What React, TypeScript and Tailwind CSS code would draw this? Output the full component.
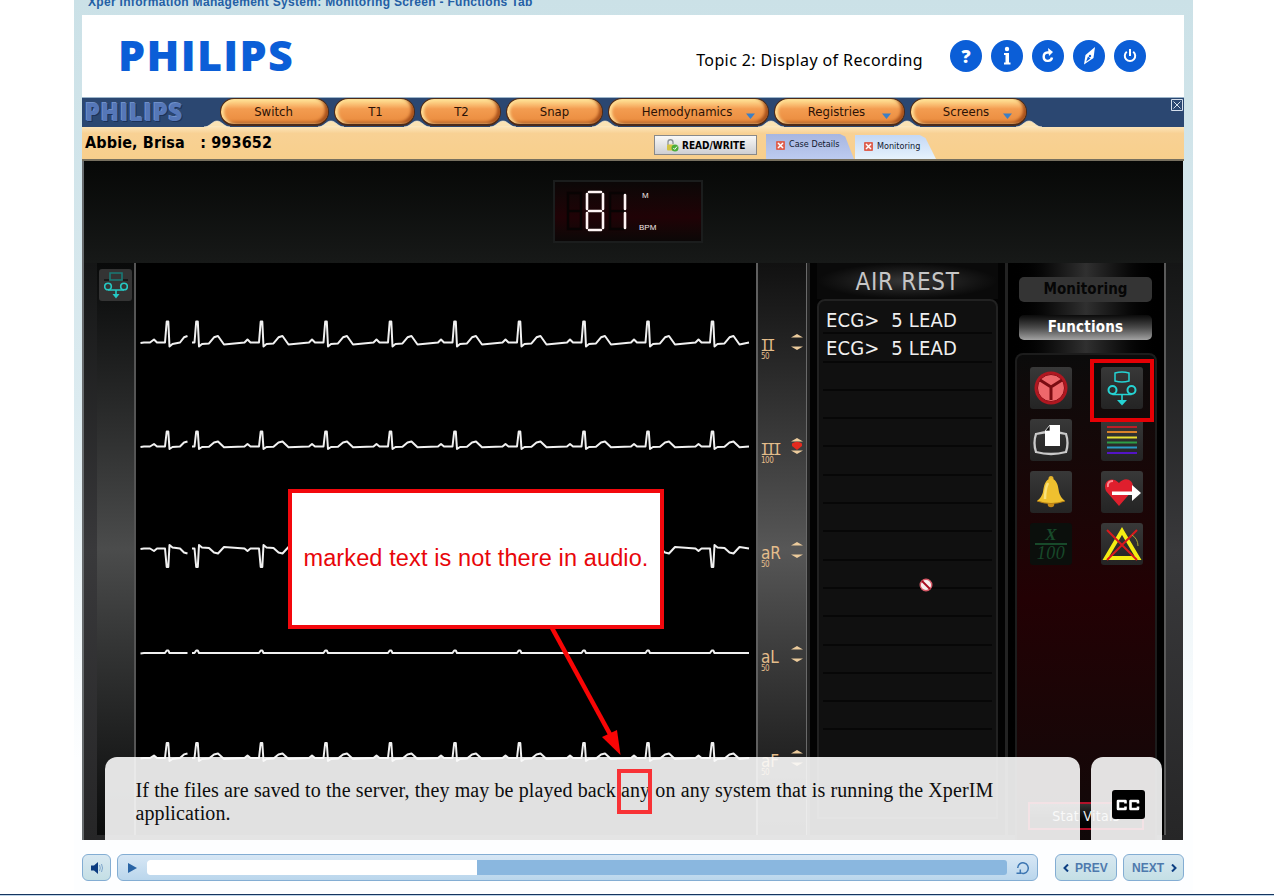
import React from 'react';

const PEAKS = [197, 261.5, 326, 390.5, 455, 519.5, 584, 648, 712.5];

type Wave = { base: number; p: number; r: number; s: number; st: number; t: number; e: number };

const WAVES: Wave[] = [
  { base: 342.5, p: -3, r: -21, s: 4, st: 1.5, t: -6.5, e: 2 },
  { base: 446.5, p: -2.5, r: -15, s: 2.5, st: 0.5, t: -5, e: 0.8 },
  { base: 548.5, p: 2.5, r: 18.5, s: -3.5, st: -1, t: 5, e: -1.5 },
  { base: 653, p: 0, r: -2.5, s: 0, st: 0, t: 0, e: 0 },
  { base: 758, p: -2.5, r: -15, s: 3, st: 1, t: -4.5, e: 1 },
];

function qrs(x: number, w: Wave) {
  const b = w.base;
  return `L${x - 2.5} ${b} L${x - 0.8} ${b + w.r} L${x + 0.8} ${b + w.r} L${x + 2} ${b + w.s} L${x + 5} ${b + w.st} `;
}

function wavePath(w: Wave) {
  const b = w.base;
  let d = `M140.500 ${b + 0.5} L144 ${b} L150 ${b} L154 ${b + w.p} L157 ${b} `;
  d += qrs(167.5, w);
  d += `L180 ${b} L184 ${b + w.t * 0.8} L187.500 ${b + w.t} M192 ${b} `;
  PEAKS.forEach((x, i) => {
    d += qrs(x, w);
    d += `L${x + 12} ${b + w.st * 0.6} L${x + 17} ${b + w.t * 0.8} L${x + 21} ${b + w.t} L${x + 27} ${b + w.e} `;
    if (i < PEAKS.length - 1) {
      const n = PEAKS[i + 1];
      d += `L${n - 17} ${b} L${n - 14} ${b + w.p} L${n - 11} ${b} `;
    } else {
      d += `L749 ${b} `;
    }
  });
  return d;
}

const HEAD_ICON = 'flex h-8 w-8 items-center justify-center rounded-full bg-[#0b5ed7] text-white';

function Header() {
  return (
    <header className="flex h-[82px] items-start bg-white">
      <div className="ml-[36px] mt-[10px] w-[180px] whitespace-nowrap font-['Open_Sans',sans-serif] text-[43px] font-extrabold leading-[60px] tracking-[1.3px] text-[#0b5ed7]">
        PHILIPS
      </div>
      <div className="ml-auto mr-[27px] mt-[34px] whitespace-nowrap font-['Noto_Sans',sans-serif] text-[16px] leading-[22px] tracking-[0.4px] text-black">
        Topic 2: Display of Recording
      </div>
      <div className="mr-[38px] mt-[25px] flex gap-[9px]">
        <div className={HEAD_ICON}>
          <span className="font-['Open_Sans',sans-serif] text-[18px] font-extrabold leading-none">?</span>
        </div>
        <div className={HEAD_ICON}>
          <svg width="14" height="22" viewBox="0 0 14 22" fill="#fff">
            <circle cx="7" cy="4" r="2.200" />
            <path d="M4 8H9V17.500H10.500V19.500H4V17.500H5.500V10H4Z" />
          </svg>
        </div>
        <div className={HEAD_ICON}>
          <svg width="16" height="16" viewBox="0 0 16 16" fill="none" stroke="#fff" strokeWidth="2.400">
            <path d="M9 4.500H7.500A4.200 4.200 0 1 0 12 9.500" />
            <path d="M8 0L13 4L9 8Z" fill="#fff" stroke="none" />
          </svg>
        </div>
        <div className={HEAD_ICON}>
          <svg width="16" height="20" viewBox="0 0 16 20">
            <path d="M14 1L12.500 12L3 18.500L4.500 9Z" fill="#fff" />
            <path d="M7 10.500L9.500 12.500L5 15.800Z" fill="#0b5ed7" />
            <circle cx="9" cy="10" r="1.200" fill="#0b5ed7" />
          </svg>
        </div>
        <div className={HEAD_ICON}>
          <svg width="16" height="16" viewBox="0 0 16 16" fill="none" stroke="#fff" strokeWidth="2">
            <path d="M4.800 3.800A5.200 5.200 0 1 0 11.200 3.800M8 1V8" />
          </svg>
        </div>
      </div>
    </header>
  );
}

function Crest() {
  return (
    <svg width="26" height="7" viewBox="0 0 26 7" className="absolute -left-[16px] bottom-0">
      <path d="M0 7C6 7 8 1 13 1S20 7 26 7Z" fill="#fbe3b4" stroke="#fdf3dc" strokeWidth="0.600" />
    </svg>
  );
}

const MENU = [
  { label: 'Switch', w: 'w-[109px]', pad: 'pr-[2px]', arrow: '' },
  { label: 'T1', w: 'w-[81px]', pad: 'pl-[2px]', arrow: '' },
  { label: 'T2', w: 'w-[81px]', pad: 'pl-[2px]', arrow: '' },
  { label: 'Snap', w: 'w-[97px]', pad: '', arrow: '' },
  { label: 'Hemodynamics', w: 'w-[161px]', pad: 'pr-[3px]', arrow: 'right-[13px]' },
  { label: 'Registries', w: 'w-[131px]', pad: 'pr-[6px]', arrow: 'right-[13px]' },
  { label: 'Screens', w: 'w-[117px]', pad: 'pr-[5px]', arrow: 'right-[14px]' },
];

function MenuBar() {
  return (
    <nav className="flex h-[30px] border-t border-[#9db6cb] bg-[#2b4771]">
      <div className="w-[138px] whitespace-nowrap pl-[3px] font-['Open_Sans',sans-serif] text-[24px] font-extrabold leading-[27px] tracking-[0.7px] text-[#5577b8] [text-shadow:1px_1px_0_#1d3258,-1px_-1px_0_#6f90ca]">
        PHILIPS
      </div>
      <div className="flex gap-[5px]">
        {MENU.map((m) => (
          <div key={m.label} className={`relative h-[29px] ${m.w}`}>
            <Crest />
            <div
              className={`relative flex h-[28px] items-center justify-center rounded-full border border-b-2 border-[#4d2a18] bg-linear-to-b from-[#ffe79a] via-[#f39c50] via-40% to-[#e98a3c] font-['DejaVu_Sans_Condensed','DejaVu_Sans',sans-serif] text-[13px] text-[#2b1206] shadow-[inset_3px_0_3px_#ffdc94,inset_-3px_-2px_3px_#a9521c] [font-stretch:condensed] ${m.pad}`}
            >
              {m.label}
              {m.arrow && (
                <svg width="9" height="6" viewBox="0 0 9 6" className={`absolute bottom-[5px] ${m.arrow}`}>
                  <path d="M0 0.500H9L4.500 6Z" fill="#3c7fc4" />
                </svg>
              )}
            </div>
          </div>
        ))}
        <div className="relative h-[29px] w-2">
          <Crest />
        </div>
      </div>
      <svg width="12" height="12" viewBox="0 0 12 12" className="ml-auto mr-[1px] mt-[1px]" fill="none" stroke="#d5dfec">
        <path d="M0.500 0.500H11.500V11.500H0.500ZM2.500 2.500L9.500 9.500M9.500 2.500L2.500 9.500" />
      </svg>
    </nav>
  );
}

function CloseMark() {
  return (
    <svg width="9" height="9" viewBox="0 0 9 9" className="shrink-0">
      <rect width="9" height="9" rx="1" fill="#dd6252" />
      <path d="M2 2L7 7M7 2L2 7" stroke="#fff" strokeWidth="1.500" />
    </svg>
  );
}

function PatientBar() {
  return (
    <div className="flex h-[34px] items-start border-b-2 border-[#77705f] bg-linear-to-b from-[#fce4b8] via-[#f8d194] via-20% to-[#f8cf8c]">
      <div className="w-[572px] whitespace-pre pl-[3px] pt-[6px] font-['DejaVu_Sans_Condensed','DejaVu_Sans',sans-serif] text-[16px] font-bold leading-[20px] tracking-[0.13px] text-black [font-stretch:condensed]">
        Abbie, Brisa   : 993652
      </div>
      <div className="mt-[8px] flex h-[20px] w-[103px] items-center border border-[#898989] bg-linear-to-b from-[#f8f8f8] to-[#cfcfd2] pl-[11px] font-['DejaVu_Sans_Condensed','DejaVu_Sans',sans-serif] text-[10px] font-bold text-black [font-stretch:condensed]">
        <svg width="13" height="13" viewBox="0 0 13 13" className="mr-[3px]">
          <path d="M2 6V3.500A2.500 2.500 0 0 1 7 3V5" fill="none" stroke="#8b9299" strokeWidth="1.300" />
          <rect x="1" y="5.500" width="7" height="6" rx="1" fill="#d2c344" />
          <circle cx="9" cy="9" r="3.500" fill="#4eae3a" />
          <path d="M7.300 9L8.700 10.400L11 7.600" fill="none" stroke="#fff" />
        </svg>
        READ/WRITE
      </div>
      <div className="ml-[9px] mt-[7px] flex h-[25px] w-[88px] items-center bg-linear-to-b from-[#a7b6e0] to-[#bccbf0] pb-[3px] pl-[10px] font-['DejaVu_Sans_Condensed','DejaVu_Sans',sans-serif] text-[9px] text-[#101830] [clip-path:polygon(0_0,84%_0,90%_10%,100%_100%,0_100%)] [font-stretch:condensed]">
        <CloseMark />
        <span className="ml-[4px] whitespace-nowrap">Case Details</span>
      </div>
      <div className="ml-px mt-[8px] flex h-[24px] w-[81px] items-center bg-linear-to-b from-[#c4d8f5] to-[#e6f2fc] pb-px pl-[9px] font-['DejaVu_Sans_Condensed','DejaVu_Sans',sans-serif] text-[9px] text-[#101830] [clip-path:polygon(0_0,80%_0,87%_12%,100%_100%,0_100%)] [font-stretch:condensed]">
        <CloseMark />
        <span className="ml-[4px] whitespace-nowrap">Monitoring</span>
      </div>
    </div>
  );
}

function HeartRate() {
  return (
    <div className="relative ml-[471px] mt-[19px] flex h-[63px] w-[150px] border-2 border-[#1b1d1d] bg-linear-to-b from-[#0b0707] via-[#200206] via-60% to-[#0b0707]">
      <svg width="90" height="58" viewBox="0 0 90 58" fill="none" strokeLinecap="round">
        <g stroke="#080303" strokeWidth="2.500">
          <path d="M13 11H26V47H13ZM13 29H26M55 11H69M55 11V47H69M55 29H69" />
        </g>
        <g stroke="#fff5f5" strokeWidth="2.600">
          <path d="M34 10H46M34 29H46M34 48H46M32 12V27M48 12V27M32 31V46M48 31V46M70 13V27M70 31V46" />
        </g>
      </svg>
      <div className="-ml-[7px] flex flex-col justify-between pb-[9px] pt-[9px] font-['Liberation_Sans',sans-serif] text-[8px] leading-[9px] text-[#f4e8e8]">
        <span className="pl-[4px]">M</span>
        <span className="pl-px">BPM</span>
      </div>
    </div>
  );
}

function ReelIcon() {
  return (
    <svg width="30" height="36" viewBox="0 0 30 36" fill="none" stroke="#25d3d3" strokeWidth="2">
      <path d="M8 3Q15 1 22 3V11Q15 13 8 11Z" strokeWidth="1.500" />
      <circle cx="5.500" cy="20" r="4" />
      <circle cx="24.500" cy="20" r="4" />
      <path d="M5.500 24.500H24.500M15 24.500V31" strokeWidth="1.600" />
      <path d="M10 30H20L15 35.500Z" fill="#25d3d3" stroke="none" />
    </svg>
  );
}

const TILE = 'flex h-[42px] w-[42px] items-center justify-center rounded-[3px] bg-linear-to-b from-[#383838] to-[#242424]';

function FunctionTiles() {
  return (
    <div className="grid grid-cols-[42px_42px] gap-x-[29px] gap-y-[10px] pl-[13px] pt-[12px]">
      <div className={TILE}>
        <svg width="36" height="36" viewBox="0 0 36 36">
          <circle cx="18" cy="18" r="16.500" fill="#b01720" />
          <circle cx="18" cy="18" r="13.500" fill="#ee686b" stroke="#8e0d15" />
          <path d="M7 10L18 17L29 10M18 17V30" fill="none" stroke="#7a0c12" strokeWidth="3" />
        </svg>
      </div>
      <div className={TILE}>
        <ReelIcon />
      </div>
      <div className={TILE}>
        <svg width="38" height="36" viewBox="0 0 38 36">
          <path d="M4 12Q19 8 34 12Q37 21 34 30Q19 34 4 30Q1 21 4 12Z" fill="none" stroke="#c9c9c9" strokeWidth="2.300" />
          <path d="M18 3H28V24H13V9Z" fill="#fff" />
          <path d="M13 9H18V3Z" fill="#0a0a0a" stroke="#fff" strokeWidth="0.700" />
        </svg>
      </div>
      <div className={TILE}>
        <svg width="30" height="30" viewBox="0 0 30 30" strokeWidth="2">
          <path d="M0 2H30" stroke="#b81f27" />
          <path d="M0 7H30" stroke="#d9822a" />
          <path d="M0 12.500H30" stroke="#e8e032" />
          <path d="M0 17.500H30" stroke="#2d9d47" />
          <path d="M0 22.500H30" stroke="#2b9bc4" />
          <path d="M0 28H30" stroke="#5314c4" />
        </svg>
      </div>
      <div className={TILE}>
        <svg width="30" height="34" viewBox="0 0 30 34">
          <circle cx="15" cy="29" r="3.300" fill="#c78a17" />
          <circle cx="15" cy="3.500" r="2.500" fill="#e5b22c" />
          <path d="M15 3C9 5 8 10 7 17Q6 22 1 26Q15 31 29 26Q24 22 23 17C22 10 21 5 15 3Z" fill="#efc02f" />
          <path d="M12 8Q9 14 9 24" stroke="#f9e17a" strokeWidth="2.500" fill="none" />
          <path d="M1 26Q15 31 29 26" stroke="#b47e12" fill="none" />
        </svg>
      </div>
      <div className={TILE}>
        <svg width="38" height="34" viewBox="0 0 38 34">
          <path d="M16 31L3 16C-1 7 8 0 16 8C23 0 33 6 29 16Z" fill="#df1f2d" />
          <path d="M5 12Q4 6 10 6" stroke="#ff8890" strokeWidth="2" fill="none" />
          <path d="M9 16.500H29V10L38 18L29 26V20H9Z" fill="#fff" />
        </svg>
      </div>
      <div className="flex h-[42px] w-[42px] flex-col items-center justify-center rounded-[3px] bg-[#0b0f0c] font-['Liberation_Serif',serif] text-[18px] italic leading-[17px] text-[#18492a]">
        <span className="w-[32px] border-b-2 border-[#18492a] text-center text-[17px] font-bold">X</span>
        <span className="tracking-[0.5px]">100</span>
      </div>
      <div className={TILE}>
        <svg width="40" height="34" viewBox="0 0 40 34" fill="none">
          <path d="M20 4L36 31H4Z" stroke="#f4ed13" strokeWidth="4" />
          <path d="M5 3L35 33M35 3L5 33" stroke="#d9191c" strokeWidth="2" />
          <path d="M30 8Q36 12 36 19" stroke="#a9a834" />
        </svg>
      </div>
    </div>
  );
}

function Spinner({ active }: { active: boolean }) {
  return (
    <svg width="12" height="18" viewBox="0 0 12 18">
      <path d="M0 4.500L6 1L12 4.500Z" fill="#eccb9c" />
      {active && <path d="M1 6.500Q6 3 11 6.500V9L6 13L1 9Z" fill="#e32a1e" />}
      <path d="M0 13.500H12L6 17Z" fill="#eccb9c" />
    </svg>
  );
}

const LEADS = [
  { name: 'II', scale: '50', active: false },
  { name: 'III', scale: '100', active: true },
  { name: 'aR', scale: '50', active: false },
  { name: 'aL', scale: '50', active: false },
  { name: 'aF', scale: '50', active: false },
];

function LeadStrip() {
  return (
    <div className="w-[49px] border-r border-[#6a6a6a] bg-linear-to-b from-[#111] via-[#575757] via-50% to-[#111] pl-[3px] pt-[68px] font-['DejaVu_Sans_Condensed','DejaVu_Sans',sans-serif] text-[#e4bd8b] [font-stretch:condensed]">
      {LEADS.map((l) => (
        <div key={l.name} className="flex h-[104px] whitespace-nowrap">
          <div className="w-[30px] pt-[6px]">
            {l.name[0] === 'I' ? (
              <div className="-ml-px font-['Noto_Sans_Mono','DejaVu_Sans_Mono',monospace] text-[16px] leading-[16px] tracking-[-3.4px]">{l.name}</div>
            ) : (
              <div className="text-[17px] leading-[16px]">{l.name}</div>
            )}
            <div className="text-[8px] leading-[7px] tracking-[-0.5px]">{l.scale}</div>
          </div>
          <div className="pt-[2px]">
            <Spinner active={l.active} />
          </div>
        </div>
      ))}
    </div>
  );
}

function RestPanel() {
  return (
    <div className="w-[201px] border-x-[3px] border-[#232323] bg-[#030303] px-[7px]">
      <div className="flex h-[36px] items-center justify-center whitespace-nowrap bg-radial from-[#383838] to-[#0a0a0a] to-70% pt-[2px] font-['DejaVu_Sans_Condensed','DejaVu_Sans',sans-serif] text-[24px] tracking-[0.7px] text-[#c6c6c6] [font-stretch:condensed]">
        AIR REST
      </div>
      <div className="h-[520px] rounded-t-lg border-2 border-[#222] bg-[#101010] px-[4px] pt-[5px] font-['DejaVu_Sans_Condensed','DejaVu_Sans',sans-serif] text-[20px] leading-[28px] tracking-[0.15px] text-[#efefef] [font-stretch:condensed]">
        {Array.from({ length: 17 }, (_, i) => (
          <div key={i} className="h-[28.300px] whitespace-pre border-b-2 border-[#070707] pl-[3px]">
            {i < 2 ? 'ECG>  5 LEAD' : ''}
          </div>
        ))}
      </div>
    </div>
  );
}

function FunctionPanel() {
  return (
    <div className="w-[158px] border-r-2 border-[#5a5a5a] bg-linear-to-r from-black via-[#303030] to-black px-[7px] pt-[14px]">
      <div className="ml-[4px] mr-[5px] flex h-[25px] items-center justify-center rounded-[5px] bg-[#343434] font-['DejaVu_Sans_Condensed','DejaVu_Sans',sans-serif] text-[15px] font-bold tracking-[0.1px] text-[#060606] [font-stretch:condensed]">
        Monitoring
      </div>
      <div className="ml-[4px] mr-[5px] mt-[13px] flex h-[25px] items-center justify-center rounded-[5px] bg-linear-to-b from-[#0b0b0b] via-[#4a4a4a] via-50% to-[#a3a3a3] font-['DejaVu_Sans_Condensed','DejaVu_Sans',sans-serif] text-[15px] font-bold tracking-[0.2px] text-white [font-stretch:condensed]">
        Functions
      </div>
      <div className="mt-[13px] flex h-[488px] flex-col rounded-t-lg border-2 border-b-0 border-[#1c1c1c] bg-linear-to-b from-[#0b0b0b] via-[#230104] via-50% to-[#100809]">
        <FunctionTiles />
        <div className="mx-[11px] mb-[11px] mt-auto flex h-[28px] items-center justify-center border-2 border-[#b3122b] bg-linear-to-b from-[#333] to-black font-['DejaVu_Sans_Condensed','DejaVu_Sans',sans-serif] text-[14px] tracking-[0.3px] text-[#eee] [font-stretch:condensed]">
          Stat Vitals
        </div>
      </div>
    </div>
  );
}

function Annotations() {
  return (
    <>
      <div className="absolute left-[206px] top-[328px] flex h-[140px] w-[376px] items-center justify-center whitespace-nowrap border-4 border-[#f3080d] bg-white font-['Liberation_Sans',Arial,sans-serif] text-[23.500px] tracking-[0.12px] text-[#e8060a]">
        marked text is not there in audio.
      </div>
      <svg width="90" height="130" viewBox="550 628 90 130" className="absolute left-[468px] top-[467px]">
        <path d="M552 628L611 736" stroke="#f90505" strokeWidth="4.500" />
        <path d="M620.500 755L602 737L617 730Z" fill="#f90505" />
      </svg>
      <svg width="14" height="14" viewBox="0 0 14 14" className="absolute left-[837px] top-[417px]">
        <circle cx="7" cy="7" r="5.800" fill="#f8eeee" stroke="#d65a68" strokeWidth="1.400" />
        <path d="M3 3L11 11" stroke="#a80c20" strokeWidth="2" />
      </svg>
      <div className="absolute left-[1008px] top-[198px] h-[63px] w-[64px] border-4 border-[#e60005]" />
    </>
  );
}

function Caption() {
  return (
    <div className="absolute bottom-0 left-[23px] flex gap-[11px]">
      <div className="h-[83px] w-[975px] whitespace-nowrap rounded-t-xl bg-[#fafafa]/90 pl-[30.500px] pt-[22px] font-['Liberation_Serif','Times_New_Roman',serif] text-[20px] leading-[23px] tracking-[0.105px] text-[#0d0d0d]">
        If the files are saved to the server, they may be played back{' '}
        <span className="relative">
          any
          <span className="absolute -left-[4px] -top-[10px] h-[45px] w-[35px] border-4 border-[#f83236]" />
        </span>{' '}
        on any system that is running the XperIM
        <br />
        application.
      </div>
      <div className="flex h-[83px] w-[71px] justify-center rounded-t-xl bg-[#fafafa]/90 pl-[3px] pt-[33px]">
        <div className="flex h-[29px] w-[33px] items-center justify-center rounded-[3px] bg-black">
          <svg width="24" height="12" viewBox="0 0 24 12" fill="none" stroke="#fff" strokeWidth="2.600" strokeLinejoin="round">
            <path d="M9.500 4.500V2H2V10H9.500V7.500M22 4.500V2H14.500V10H22V7.500" />
          </svg>
        </div>
      </div>
    </div>
  );
}

function Monitor() {
  return (
    <main className="relative h-[679px] w-[1101px] overflow-hidden border-l-2 border-[#686c6e] bg-linear-to-b from-[#060606] to-[#161818] to-15%">
      <div className="flex h-[102px] flex-col bg-linear-to-b from-[#070807] to-[#171918]">
        <div className="-ml-[2px]">
          <HeartRate />
        </div>
      </div>
      <div className="flex h-[577px] bg-linear-to-b from-[#151616] via-[#39393b] via-50% to-[#262627] pb-[5px]">
        <div className="w-[13px]" />
        <div className="flex w-[39px] flex-col items-center border-r-2 border-[#555] bg-linear-to-b from-[#090a0a] via-[#4b4c4c] via-50% to-[#0b0c0c] pt-[6px]">
          <div className="flex h-[32px] w-[33px] items-center justify-center rounded-[3px] bg-[#343434]">
            <svg width="24" height="28" viewBox="0 0 24 28" fill="none" stroke="#25c9c4" strokeWidth="1.600">
              <path d="M6 2H18V9H6Z" stroke="#187a76" />
              <path d="M0 9H5M19 9H24" stroke="#101010" />
              <circle cx="4" cy="15.500" r="3.300" />
              <circle cx="20" cy="15.500" r="3.300" />
              <path d="M4 19H20M12 19V25" />
              <path d="M8.500 23H15.500L12 27.500Z" fill="#25c9c4" stroke="none" />
            </svg>
          </div>
        </div>
        <div className="w-[622px] border-r-2 border-[#5f5f5f] bg-black">
          <svg width="620" height="572" viewBox="136 263 620 572" fill="none" stroke="#f1f1f1" strokeWidth="2" strokeLinejoin="round">
            {WAVES.map((w) => (
              <path key={w.base} d={wavePath(w)} />
            ))}
          </svg>
        </div>
        <LeadStrip />
        <RestPanel />
        <FunctionPanel />
      </div>
      <div className="absolute -left-[2px] top-0 h-full w-[1101px]">
        <Annotations />
        <Caption />
      </div>
    </main>
  );
}

const CTRL =
  "flex h-[27px] items-center rounded-[6px] border border-[#83add3] bg-linear-to-b from-[#d8e8f1] to-[#c4dfe5] font-['Liberation_Sans',Arial,sans-serif] text-[12px] font-bold text-[#4e79ad]";

function Player() {
  return (
    <footer className="flex h-[53px] items-start bg-[#fdfeff] pt-[14px]">
      <div className={`${CTRL} w-[29px] justify-center`}>
        <svg width="12" height="12" viewBox="0 0 12 12">
          <path d="M0 3.500H3L7 0V12L3 8.500H0Z" fill="#0b3c80" />
          <path d="M8.500 3Q10 6 8.500 9M10.500 2Q12.500 6 10.500 10" fill="none" stroke="#7da4cb" />
        </svg>
      </div>
      <div className="ml-[6px] flex h-[27px] w-[921px] items-center rounded-[6px] border border-[#83add3] bg-linear-to-b from-[#d7e7f5] to-[#bad6ec]">
        <svg width="9" height="10" viewBox="0 0 9 10" className="ml-[10px] mr-[10px]">
          <path d="M0 0L9 5L0 10Z" fill="#2964a5" />
        </svg>
        <div className="flex h-[15px] w-[860px] overflow-hidden rounded-[3px] bg-[#8ab7df]">
          <div className="w-[330px] bg-white" />
        </div>
        <svg width="14" height="14" viewBox="0 0 14 14" className="ml-[9px]" fill="none" stroke="#3d76b2" strokeWidth="1.500">
          <path d="M4 11.500A5.300 5.300 0 1 0 1.700 7M0.500 12.300H4.300V8.500" />
        </svg>
      </div>
      <div className={`${CTRL} ml-[17px] w-[62px] pl-[7px]`}>
        <svg width="6" height="8" viewBox="0 0 6 8" className="mr-[6px]" fill="none" stroke="#0d3f83" strokeWidth="2">
          <path d="M5 0.500L1.500 4L5 7.500" />
        </svg>
        PREV
      </div>
      <div className={`${CTRL} ml-[6px] w-[61px] pl-[8px]`}>
        NEXT
        <svg width="6" height="8" viewBox="0 0 6 8" className="ml-[7px]" fill="none" stroke="#0d3f83" strokeWidth="2">
          <path d="M1 0.500L4.500 4L1 7.500" />
        </svg>
      </div>
    </footer>
  );
}

export default function App() {
  return (
    <div className="flex h-[896px] w-[1274px] flex-col overflow-hidden bg-white">
      <div className="ml-[74px] h-[893px] w-[1119px] bg-linear-to-b from-[#cbe1e7] via-[#dcebf0] via-45% to-[#fdfeff] to-85% pl-[8px] pr-[9px]">
        <div className="h-[15px] overflow-hidden whitespace-nowrap pl-[6px] font-['Liberation_Sans',Arial,sans-serif] text-[12px] font-bold leading-[14px] tracking-[0.31px] text-[#245fa5]">
          <div className="-mt-[5px]">Xper Information Management System: Monitoring Screen - Functions Tab</div>
        </div>
        <Header />
        <MenuBar />
        <PatientBar />
        <Monitor />
        <Player />
      </div>
      <div className="mt-[1px] h-[2px] border-t border-[#16355e] bg-[#bed4e8]" />
    </div>
  );
}
